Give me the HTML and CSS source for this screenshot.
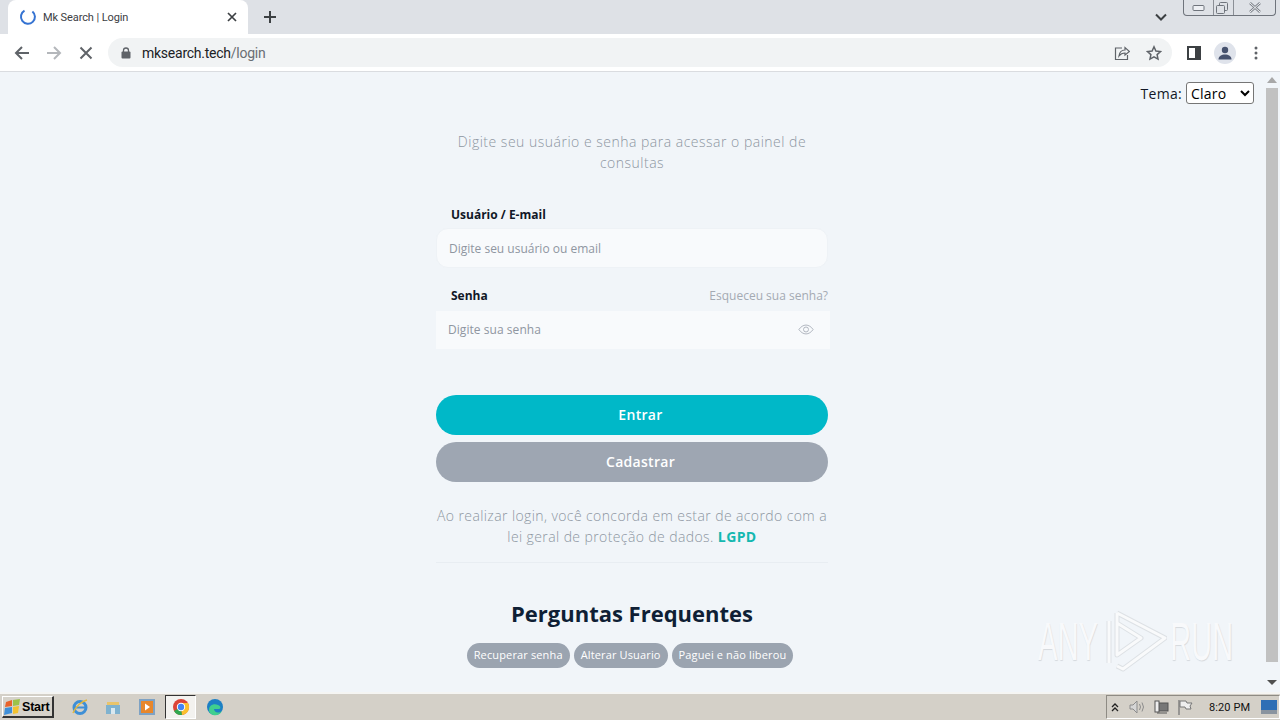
FILE: index.html
```html
<!DOCTYPE html>
<html lang="pt-BR">
<head>
<meta charset="utf-8">
<title>Mk Search | Login</title>
<link rel="stylesheet" href="styles.css">
</head>
<body>
<div class="tabstrip">
  <div class="tab">
    <svg class="spinner" width="18" height="18" viewBox="0 0 18 18"><path d="M5.500 2.700A7 7 0 1 0 13.400 3.400" fill="none" stroke="#3573d2" stroke-width="2"/></svg>
    <span class="tab-title">Mk Search | Login</span>
    <svg class="tab-close" width="10" height="10" viewBox="0 0 10 10"><path d="M1 1l8 8M9 1l-8 8" stroke="#3c4043" stroke-width="1.700"/></svg>
  </div>
  <svg class="new-tab" width="14" height="14" viewBox="0 0 14 14"><path d="M7 1v12M1 7h12" stroke="#3c4043" stroke-width="2"/></svg>
  <svg class="tab-menu" width="12" height="8" viewBox="0 0 12 8"><path d="M1 1.500l5 5 5-5" fill="none" stroke="#3c4043" stroke-width="2"/></svg>
  <div class="win-controls">
    <div class="win-btn win-min"><svg width="14" height="8" viewBox="0 0 14 8"><rect x="1" y="1.500" width="11" height="5" rx="1" fill="#eef0f4" stroke="#6f747c"/></svg></div>
    <div class="win-btn win-max"><svg width="14" height="14" viewBox="0 0 14 14"><rect x="4.500" y="1.500" width="8" height="8" rx="1" fill="none" stroke="#6f747c"/><rect x="1.500" y="4.500" width="8" height="8" rx="1" fill="#dee1e6" stroke="#6f747c"/></svg></div>
    <div class="win-btn win-close"><svg width="14" height="11" viewBox="0 0 14 11"><path d="M2 1l10 9M12 1L2 10" stroke="#7a7f87" stroke-width="2.400"/><path d="M2 1l10 9M12 1L2 10" stroke="#f2f3f5" stroke-width="1"/></svg></div>
  </div>
</div>
<div class="toolbar">
  <svg class="nav" width="16" height="16" viewBox="0 0 16 16"><path d="M15 8H2M8 2L2 8l6 6" fill="none" stroke="#5f6368" stroke-width="2"/></svg>
  <svg class="nav" width="16" height="16" viewBox="0 0 16 16"><path d="M1 8h13M8 2l6 6-6 6" fill="none" stroke="#b4b7bb" stroke-width="2"/></svg>
  <svg class="nav" width="14" height="14" viewBox="0 0 14 14"><path d="M1.500 1.500l11 11M12.500 1.500l-11 11" stroke="#5f6368" stroke-width="2"/></svg>
  <div class="omnibox">
    <svg width="10" height="12" viewBox="0 0 10 12"><path d="M2.500 5V3.500a2.500 2.500 0 0 1 5 0V5" fill="none" stroke="#5f6368" stroke-width="1.300"/><rect x="0.500" y="4.500" width="9" height="7" rx="1" fill="#5f6368"/></svg>
    <span class="url"><span class="url-host">mksearch.tech</span>/login</span>
    <svg class="omni-share" width="16" height="16" viewBox="0 0 16 16"><path d="M8 3H1.500v11.500h12V10" fill="none" stroke="#5f6368" stroke-width="1.200"/><path d="M5 11c.5-4 3-6 6-6V2.500L15.500 6.500 11 10V8c-2.500 0-4.500 1-6 3z" fill="#f1f3f4" stroke="#5f6368" stroke-width="1.200"/></svg>
    <svg class="omni-star" width="16" height="16" viewBox="0 0 16 16"><path d="M8 1.800l1.900 4.200 4.600.5-3.400 3.100.9 4.500-4-2.300-4 2.300.9-4.500L1.500 6.500l4.600-.5z" fill="none" stroke="#5f6368" stroke-width="1.500"/></svg>
  </div>
  <svg class="side-panel" width="14" height="14" viewBox="0 0 14 14"><rect x="1" y="1" width="12" height="12" fill="none" stroke="#3c4043" stroke-width="2"/><rect x="8" y="1" width="5" height="12" fill="#3c4043"/></svg>
  <div class="avatar"><svg width="14" height="14" viewBox="0 0 14 14"><circle cx="7" cy="4" r="3.200" fill="#46526e"/><path d="M0.500 13.500c0-3.500 3-5 6.500-5s6.500 1.500 6.500 5z" fill="#46526e"/></svg></div>
  <svg class="kebab" width="4" height="14" viewBox="0 0 4 14"><circle cx="2" cy="2" r="1.500" fill="#5f6368"/><circle cx="2" cy="7" r="1.500" fill="#5f6368"/><circle cx="2" cy="12" r="1.500" fill="#5f6368"/></svg>
</div>
<div class="viewport">
  <main class="page">
    <div class="theme-row">
      <label class="theme-label" for="tema">Tema:</label>
      <select class="theme-select" id="tema"><option>Claro</option></select>
    </div>
    <div class="login">
      <p class="intro">Digite seu usuário e senha para acessar o painel de consultas</p>
      <div class="label-row first"><span class="label">Usuário / E-mail</span></div>
      <div class="input rounded"><span>Digite seu usuário ou email</span></div>
      <div class="label-row"><span class="label">Senha</span><span class="forgot">Esqueceu sua senha?</span></div>
      <div class="input square">
        <span>Digite sua senha</span>
        <svg width="16" height="11" viewBox="0 0 18 12"><path d="M1 6c2-3 5-5 8-5s6 2 8 5c-2 3-5 5-8 5S3 9 1 6z" fill="none" stroke="#a9afb9"/><circle cx="9" cy="6" r="2.800" fill="none" stroke="#a9afb9"/></svg>
      </div>
      <button class="btn primary"><span>Entrar</span></button>
      <button class="btn secondary"><span>Cadastrar</span></button>
      <p class="terms">Ao realizar login, você concorda em estar de acordo com a lei geral de proteção de dados. <a class="lgpd">LGPD</a></p>
      <hr class="divider">
      <h2 class="faq-title">Perguntas Frequentes</h2>
      <div class="chips">
        <span class="chip">Recuperar senha</span>
        <span class="chip">Alterar Usuario</span>
        <span class="chip">Paguei e não liberou</span>
      </div>
    </div>
  </main>
  <div class="scrollbar">
    <svg class="arrow-up" width="10" height="6" viewBox="0 0 10 6"><path d="M5 0l5 6H0z" fill="#a8a8a8"/></svg>
    <div class="thumb"></div>
    <svg class="arrow-down" width="10" height="5" viewBox="0 0 10 5"><path d="M5 5L0 0h10z" fill="#505050"/></svg>
  </div>
  <div class="watermark">
    <span class="wm-text">ANY</span>
    <svg width="64" height="64" viewBox="0 0 64 64"><g fill="none" stroke-linejoin="round"><path d="M6 12v42M14 4v42l24-17L14 14M14 4l48 25-42 31-6-3" stroke="#dde1e5" stroke-width="5"/><path d="M6 12v42M14 4v42l24-17L14 14M14 4l48 25-42 31-6-3" stroke="#f9fafb" stroke-width="3"/></g></svg>
    <span class="wm-text">RUN</span>
  </div>
</div>
<div class="taskbar">
  <div class="start">
    <svg width="17" height="16" viewBox="0 0 17 16"><path d="M2 3l6-2v6l-7 1z" fill="#e8632c"/><path d="M9 1l7-1-1 6-6 1z" fill="#9cc24a"/><path d="M1 9l7-1v6l-8 2z" fill="#3f8fd8"/><path d="M9 8l6-1-1 7-5 1z" fill="#f2c230"/></svg>
    <span>Start</span>
  </div>
  <div class="quick">
    <svg class="quick-ie" width="18" height="18" viewBox="0 0 18 18"><circle cx="9" cy="9.500" r="6" fill="none" stroke="#3e8fd6" stroke-width="3"/><path d="M4 9.500h10" stroke="#3e8fd6" stroke-width="2"/><path d="M2 15c3-7 9-12 14-13" fill="none" stroke="#e5b83c" stroke-width="1.500"/></svg>
    <svg width="18" height="18" viewBox="0 0 18 18"><path d="M3 4h12v3H3z" fill="#e9c46a"/><path d="M2 7h14v9H2z" fill="#7fb2cf"/><path d="M7 10h4v6H7z" fill="#d9e8ef"/></svg>
    <svg width="18" height="18" viewBox="0 0 18 18"><rect x="1" y="1" width="16" height="16" fill="#7ea2c4"/><rect x="3" y="3" width="12" height="12" fill="#e8872b"/><path d="M7 5.500l5 3.500-5 3.500z" fill="#fff"/></svg>
    <div class="quick-active"><svg width="18" height="18" viewBox="0 0 18 18"><circle cx="9" cy="9" r="8" fill="#dc4437"/><path d="M9 9L2 13a8 8 0 0 0 8 4z" fill="#2fa84f"/><path d="M9 5h7a8 8 0 0 1-6 12z" fill="#fbc02d"/><circle cx="9" cy="9" r="4.200" fill="#fff"/><circle cx="9" cy="9" r="3.200" fill="#4285f4"/></svg></div>
    <svg width="18" height="18" viewBox="0 0 18 18"><circle cx="9" cy="9" r="8" fill="#1c7fc4"/><path d="M3 12c0-5 5-7 9-5 3 1 3 4 1 4H8c0 3 4 5 8 2-2 4-6 5-9 4-3-1-4-3-4-5z" fill="#3fcf8e"/></svg>
  </div>
  <div class="tray">
    <svg class="tray-arrows" width="8" height="9" viewBox="0 0 8 9"><path d="M1 4l3-3 3 3M1 8l3-3 3 3" fill="none" stroke="#222" stroke-width="1.300"/></svg>
    <svg width="16" height="14" viewBox="0 0 16 14"><path d="M1 5h3l4-4v12l-4-4H1z" fill="#d6d6d6" stroke="#8c8c8c"/><path d="M10.500 4q2 3 0 6M13 2.500q3 4.500 0 9" fill="none" stroke="#8c8c8c"/></svg>
    <svg width="16" height="15" viewBox="0 0 16 15"><rect x="5" y="3" width="10" height="8" fill="#777" stroke="#555"/><rect x="2" y="1" width="4" height="11" fill="#eee" stroke="#555"/><path d="M4 13h10" stroke="#555"/></svg>
    <svg width="16" height="16" viewBox="0 0 16 16"><path d="M2 1v15" stroke="#777" stroke-width="1.300"/><path d="M3 2h6l1 2h5l-2 3 1 3H9l-1-2H3z" fill="#eee" stroke="#777"/></svg>
    <span class="clock">8:20 PM</span>
    <svg class="desktop" width="16" height="14" viewBox="0 0 16 14"><rect width="16" height="14" fill="#2f6fb5"/><rect y="10" width="16" height="4" fill="#8a949f"/></svg>
  </div>
</div>
</body>
</html>
```
FILE: styles.css
```css
* { box-sizing: border-box; }
html, body { margin: 0; padding: 0; height: 720px; overflow: hidden; }
body { display: flex; flex-direction: column; width: 1280px; font-family: "Open Sans", sans-serif; background: #f1f5f9; }
svg { display: block; flex: none; }

.tabstrip { height: 34px; background: #dee1e6; display: flex; align-items: flex-start; padding-left: 8px; }
.tab { width: 240px; height: 34px; background: #fff; border-radius: 8px 8px 0 0; display: flex; align-items: center; padding: 0 11px 0 11px; }
.spinner { margin-right: 6px; }
.tab-title { font: 11px "Roboto", sans-serif; color: #3c4043; flex: 1; letter-spacing: -0.1px; }
.new-tab { margin: 10px 0 0 15px; }
.tab-menu { margin: 13px 16px 0 auto; }
.win-controls { display: flex; width: 93px; height: 16px; margin-right: 4px; border: 1px solid #6f747c; border-top: 0; border-radius: 0 0 4px 4px; background: #dee1e6; }
.win-btn { display: flex; align-items: center; justify-content: center; border-right: 1px solid #8b8f96; }
.win-min { width: 30px; }
.win-max { width: 20px; padding-right: 3px; }
.win-close { flex: 1; border-right: 0; }

.toolbar { height: 38px; background: #fff; border-bottom: 1px solid #dadce0; display: flex; align-items: center; padding-left: 14px; }
.nav { margin-right: 16px; }
.nav:nth-child(3) { margin: 0 15px 0 1px; }
.omnibox { width: 1064px; height: 29px; background: #f1f3f4; border-radius: 15px; display: flex; align-items: center; padding-left: 13px; }
.url { font: 14px "Roboto", sans-serif; color: #6a6e73; margin-left: 11px; flex: 1; letter-spacing: -0.25px; }
.url-host { color: #202124; }
.omni-share { margin-right: 16px; }
.omni-star { margin-right: 10px; }
.side-panel { margin-left: 15px; }
.avatar { width: 22px; height: 22px; border-radius: 50%; background: #dfe3eb; display: flex; align-items: center; justify-content: center; margin-left: 13px; }
.kebab { margin-left: 18px; }

.viewport { height: 620px; display: flex; position: relative; background: #f1f5f9; }
.page { flex: 1; display: flex; flex-direction: column; align-items: center; min-width: 0; }
.theme-row { align-self: stretch; height: 24px; margin-top: 9px; padding-right: 10px; display: flex; justify-content: flex-end; align-items: center; gap: 4px; }
.theme-label { font: 14px "Open Sans", sans-serif; color: #111827; letter-spacing: 0.3px; }
.theme-select { width: 68px; height: 22px; font: 14px "Open Sans", sans-serif; letter-spacing: 0.2px; background: #fff; border: 1px solid #767676; border-radius: 3px; padding-left: 0; color: #000; }

.login { width: 392px; display: flex; flex-direction: column; }
.intro { margin: 26px 0 0; text-align: center; font-size: 14px; line-height: 21px; letter-spacing: 0.5px; color: #8d95a1; font-weight: 300; }
.label-row { display: flex; justify-content: space-between; align-items: center; height: 20px; padding-left: 15px; margin-top: 17px; }
.label-row.first { margin-top: 31px; }
.label { font-size: 12px; font-weight: 700; color: #111827; }
.forgot { font-size: 12px; color: #a4aab3; }
.input { margin-top: 4px; background: #f8fafc; display: flex; align-items: center; justify-content: space-between; font-size: 12px; color: #8f96a1; }
.input.rounded { height: 40px; border: 1px solid #eef2f6; border-radius: 12px; padding: 0 12px; }
.input.square { height: 38px; width: 394px; padding: 0 16px 1px 12px; letter-spacing: 0.05px; margin-top: 6px; }
.btn { border: 0; height: 40px; border-radius: 20px; font: 600 14px "Open Sans", sans-serif; color: #fff; padding: 0 0 2px 17px; letter-spacing: 0.3px; }
.btn.primary { background: #00b8c8; margin-top: 46px; }
.btn.secondary { background: #9ea6b2; margin-top: 7px; }
.terms { margin: 23px 0 0; text-align: center; font-size: 14px; line-height: 21px; letter-spacing: 0.4px; color: #8d95a1; font-weight: 300; }
.lgpd { color: #14b8b0; font-weight: 700; }
.divider { width: 100%; border: 0; border-top: 1px solid #e8edf2; margin: 15px 0 0; }
.faq-title { margin: 35px 0 0; text-align: center; font-size: 22px; line-height: 30px; font-weight: 700; color: #0f1f35; }
.chips { display: flex; justify-content: center; gap: 4px; margin-top: 15px; padding-right: 4px; }
.chip { height: 25px; padding: 0 7px; border-radius: 12.5px; background: #9ba4b0; color: #fff; font-size: 11px; line-height: 23px; letter-spacing: 0.14px; }

.scrollbar { width: 16px; display: flex; flex-direction: column; align-items: center; background: #f1f5f9; }
.arrow-up { margin-top: 5px; }
.thumb { width: 12px; height: 574px; background: #c1c1c1; margin-top: 5px; }
.arrow-down { margin-top: 18px; }
.watermark { position: absolute; left: 1038px; top: 537px; width: 194px; display: flex; align-items: center; justify-content: space-between; pointer-events: none; }
.wm-text { font: 54px/64px "Liberation Sans", sans-serif; color: #f8f9fb; text-shadow: 1px 1px 1px #d5d9de; width: 62px; display: inline-block; transform: scaleX(0.54); transform-origin: left center; white-space: nowrap; }

.taskbar { height: 28px; background: #d4d0c8; border-top: 2px solid #f5f5f3; display: flex; align-items: center; padding-left: 2px; }
.start { width: 52px; height: 22px; background: #d6d2ca; border: 1px solid #fff; border-right: 2px solid #333; border-bottom: 2px solid #333; display: flex; align-items: center; gap: 1px; padding-left: 1px; font: 700 12.5px "Liberation Sans", sans-serif; color: #000; letter-spacing: -0.2px; }
.quick { display: flex; align-items: center; gap: 16px; margin-left: 17px; }
.quick-ie { margin-right: -1px; }
.quick-active { width: 31px; height: 24px; background: #f3f2ef; border: 1px solid #333; border-right-color: #fff; border-bottom-color: #fff; display: flex; align-items: center; justify-content: center; margin: 0 -6px 0 -7px; }
.tray { margin-left: auto; width: 174px; height: 24px; border: 1px solid #8e8b84; border-right-color: #fff; border-bottom-color: #fff; display: flex; align-items: center; padding-left: 4px; gap: 8px; }
.tray-arrows { margin-right: 2px; }
.clock { font: 11px "Roboto", sans-serif; color: #111; margin-left: 8px; letter-spacing: 0.1px; }
.desktop { margin-left: 3px; }
```
